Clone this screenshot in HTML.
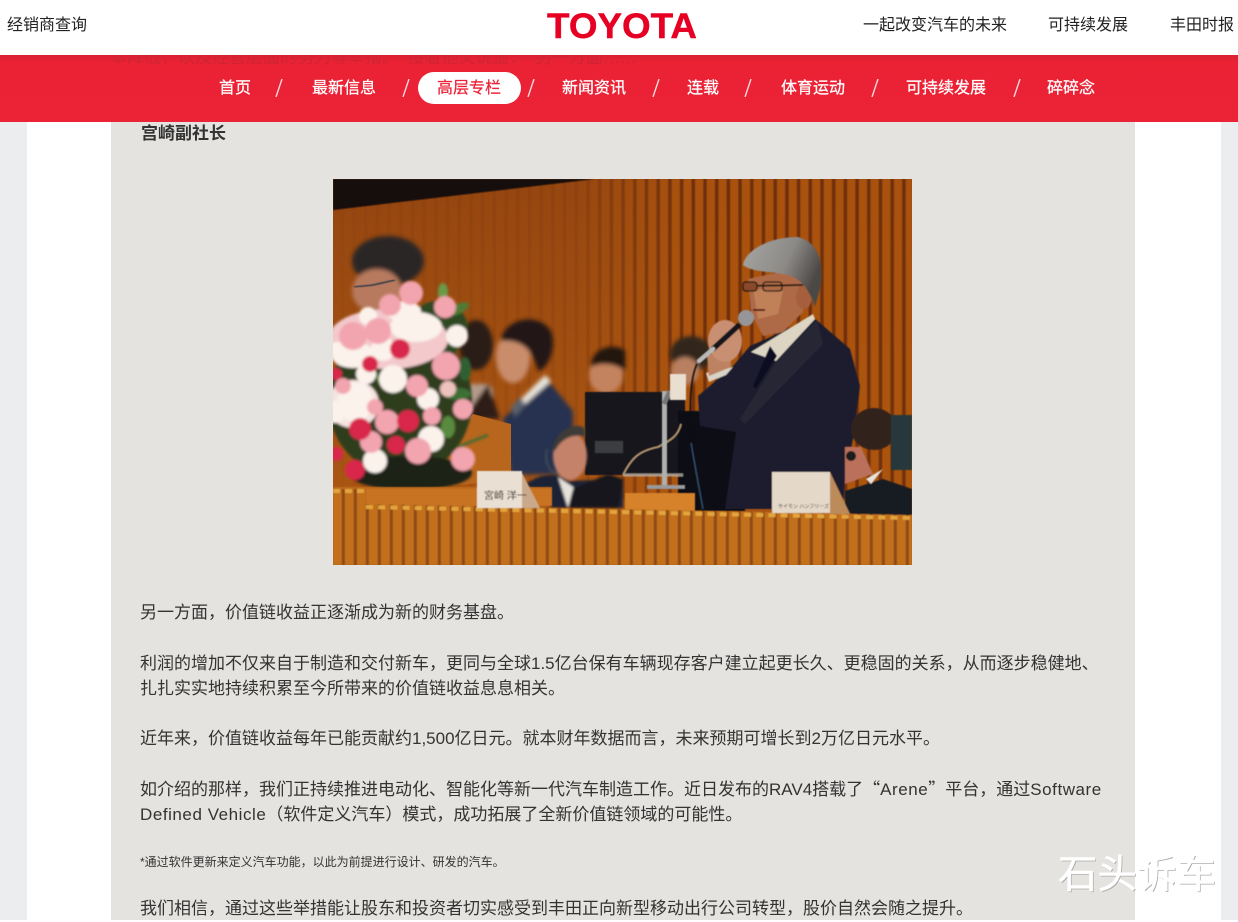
<!DOCTYPE html>
<html lang="zh"><head><meta charset="utf-8"><title>丰田</title>
<style>
html,body{margin:0;padding:0}
body{width:1238px;height:920px;position:relative;overflow:hidden;background:#fff;font-family:"Liberation Sans","Noto Sans CJK SC",sans-serif;color:#333}
.a{position:absolute;white-space:nowrap}
.l{position:absolute;left:140px;white-space:nowrap;font-size:17px;line-height:26px;color:#333}
.l b{font-weight:400;letter-spacing:.55px}
.l i{font-style:normal;font-family:"Noto Sans CJK SC",sans-serif}
.h{position:absolute;top:14px;font-size:16px;line-height:24px;color:#222;white-space:nowrap}
.n{position:absolute;top:77px;font-size:16px;line-height:24px;color:#fff;white-space:nowrap;-webkit-text-stroke:.25px #fff}
.s{position:absolute;top:79px;width:8px;height:18px}
</style></head><body>
<div class="a" style="left:0;top:0;width:27px;height:920px;background:#ecedee"></div>
<div class="a" style="left:1221px;top:0;width:17px;height:920px;background:#ecedee"></div>
<div class="a" style="left:111px;top:40px;width:1024px;height:880px;background:#e4e3df"></div>

<div class="a" style="left:0;top:55px;width:1238px;height:67px;background:linear-gradient(#d82232 0,#ea2234 7px,#ec2236 100%)"></div>
<div class="a" style="left:110px;top:45px;height:26px;overflow:hidden;font-size:17px;line-height:26px;color:#cf2434;clip-path:inset(10px 0 0 0)">本降低，以及经营层面的努力等举措。　接着他又说道：　另一方面……</div>
<div class="a" style="left:0;top:0;width:1238px;height:55px;background:#fff"></div>

<svg class="a" style="left:540px;top:5px" width="165" height="40" viewBox="0 0 165 40"><text x="7" y="33" font-family="Liberation Sans" font-weight="700" font-size="35" fill="#e60023" stroke="#e60023" stroke-width=".4" textLength="150" lengthAdjust="spacingAndGlyphs">TOYOTA</text></svg>
<div class="h" style="left:7px">经销商查询</div>
<div class="h" style="left:863px">一起改变汽车的未来</div>
<div class="h" style="left:1048px">可持续发展</div>
<div class="h" style="left:1170px">丰田时报</div>

<div class="a" style="left:418px;top:72px;width:103px;height:32px;border-radius:16px;background:#fff"></div>
<div class="n" style="left:219px">首页</div>
<div class="n" style="left:312px">最新信息</div>
<div class="n" style="left:437px;color:#ec2236;-webkit-text-stroke:.2px #ec2236">高层专栏</div>
<div class="n" style="left:562px">新闻资讯</div>
<div class="n" style="left:687px">连载</div>
<div class="n" style="left:781px">体育运动</div>
<div class="n" style="left:906px">可持续发展</div>
<div class="n" style="left:1047px">碎碎念</div>
<svg class="s" style="left:275px"><path d="M1 18L7 0" stroke="#f8d8dc" stroke-width="1.4"/></svg>
<svg class="s" style="left:402px"><path d="M1 18L7 0" stroke="#f8d8dc" stroke-width="1.4"/></svg>
<svg class="s" style="left:527px"><path d="M1 18L7 0" stroke="#f8d8dc" stroke-width="1.4"/></svg>
<svg class="s" style="left:652px"><path d="M1 18L7 0" stroke="#f8d8dc" stroke-width="1.4"/></svg>
<svg class="s" style="left:744px"><path d="M1 18L7 0" stroke="#f8d8dc" stroke-width="1.4"/></svg>
<svg class="s" style="left:871px"><path d="M1 18L7 0" stroke="#f8d8dc" stroke-width="1.4"/></svg>
<svg class="s" style="left:1013px"><path d="M1 18L7 0" stroke="#f8d8dc" stroke-width="1.4"/></svg>

<div class="l" style="top:121px;font-weight:700;left:141px">宫崎副社长</div>

<svg class="a" style="left:333px;top:179px" width="579" height="386" viewBox="0 0 579 386">
<defs>
<pattern id="st" width="11.7" height="10" patternUnits="userSpaceOnUse"><rect width="11.7" height="10" fill="#ad5410"/><rect x="7.5" width="3.6" height="10" fill="#682c07"/></pattern>
<pattern id="ds" width="12" height="10" patternUnits="userSpaceOnUse"><rect width="12" height="10" fill="#c2701f"/><rect x="8.8" width="3" height="10" fill="#8e4a12"/></pattern>
<linearGradient id="fd" x1="0" x2="1" y1="0" y2="0"><stop offset="0" stop-color="#fff" stop-opacity=".05"/><stop offset=".42" stop-color="#fff" stop-opacity=".12"/><stop offset=".62" stop-color="#fff" stop-opacity=".85"/></linearGradient>
<mask id="m" maskUnits="userSpaceOnUse" x="0" y="0" width="579" height="386"><rect width="579" height="386" fill="url(#fd)"/></mask>
<linearGradient id="wl" x1="0" x2="0" y1="0" y2="1"><stop offset="0" stop-color="#934510"/><stop offset=".8" stop-color="#aa5613"/></linearGradient>
<linearGradient id="hr" x1="0" x2="1" y1="0" y2=".4"><stop offset="0" stop-color="#a8a6a3"/><stop offset=".6" stop-color="#8c8a87"/><stop offset="1" stop-color="#4c4845"/></linearGradient>
<filter id="b0" x="-5%" y="-5%" width="110%" height="110%"><feGaussianBlur stdDeviation=".6"/></filter>
<filter id="b1" x="-10%" y="-10%" width="120%" height="120%"><feGaussianBlur stdDeviation="2.2"/></filter>
<filter id="b2" x="-10%" y="-10%" width="120%" height="120%"><feGaussianBlur stdDeviation="1.2"/></filter>
</defs>
<rect width="579" height="386" fill="url(#wl)"/>
<g mask="url(#m)"><rect width="579" height="320" fill="url(#st)" filter="url(#b0)"/></g>
<polygon points="0,0 262,0 0,31" fill="#150d08" filter="url(#b0)"/>
<g filter="url(#b1)">
<ellipse cx="143" cy="166" rx="17" ry="25" fill="#2a1c14"/>
<rect x="130" y="205" width="30" height="35" rx="8" fill="#b39a8a"/>
<polygon points="155,205 167,240 130,240" fill="#2d1f18"/>
<ellipse cx="180" cy="178" rx="17" ry="26" fill="#c98d6c"/>
<path d="M168,162 C170,140 205,132 218,152 C224,170 215,190 205,192 C200,172 190,160 168,162Z" fill="#241713"/>
<polygon points="170,240 212,198 240,232 240,295 178,296" fill="#26304f"/>
<polygon points="186,222 212,196 218,202 192,225" fill="#e6e2da"/>
<polygon points="178,228 188,218 192,226 182,238" fill="#5a6270"/>
<ellipse cx="273" cy="196" rx="17" ry="19" fill="#c4835f"/>
<path d="M258,188 C258,166 285,164 292,172 L292,192 C285,186 270,182 258,188Z" fill="#231710"/>
<ellipse cx="55" cy="82" rx="36" ry="25" fill="#2b2726"/>
<ellipse cx="44" cy="112" rx="25" ry="22" fill="#b87a5e"/>
</g>
<path d="M21,108 L40,106 L62,101" stroke="#333a44" stroke-width="1.6" fill="none" filter="url(#b0)"/>
<polygon points="140,235 178,245 178,300 95,310 120,260" fill="#b8661d"/>

<!-- monitor, dark equipment -->
<g filter="url(#b0)">
<rect x="252" y="213" width="100" height="83" fill="#15161a"/>
<rect x="262" y="262" width="28" height="12" fill="#3a3d40"/>
<rect x="345" y="232" width="67" height="100" fill="#0f1016"/>
<path d="M290,296 L350,296" stroke="#c8c2b8" stroke-width="3" opacity=".7"/>
<path d="M290,296 C298,280 305,272 325,268 C336,262 345,258 348,245" fill="none" stroke="#b89a74" stroke-width="1.6"/>
</g>
<g filter="url(#b2)">
<path d="M193,305 C205,295 225,292 235,302 L290,300 L290,329 L219,329 Z" fill="#1f2436"/>
<ellipse cx="237" cy="277" rx="17" ry="24" fill="#c4826a"/>
<path d="M220,270 C222,250 245,242 252,250 L252,258 C240,254 228,260 222,272Z" fill="#3d3a38"/>
<polygon points="225,298 240,308 248,329 235,329" fill="#e5e2dc"/>
<path d="M214,270 C211,285 217,293 225,295" fill="none" stroke="#444b58" stroke-width="2"/>
<polygon points="240,310 275,295 290,300 285,329 235,329" fill="#12131a"/>
</g>

<!-- flowers -->
<g filter="url(#b2)">
<ellipse cx="67" cy="222" rx="72" ry="76" fill="#2d3d1d"/>
<ellipse cx="77" cy="294" rx="62" ry="17" fill="#1d2312"/>
<ellipse cx="105" cy="150" rx="30" ry="28" fill="#2f4a22"/>
<ellipse cx="125" cy="130" rx="12" ry="5" fill="#4f7c35" transform="rotate(-25 125 130)"/>
<ellipse cx="110" cy="113" rx="5" ry="9" fill="#6a9a48"/>
<ellipse cx="132" cy="190" rx="6" ry="12" fill="#2f6030"/>
<ellipse cx="125" cy="215" rx="13" ry="6" fill="#3d7034"/>
<ellipse cx="115" cy="248" rx="7" ry="11" fill="#5a8a40"/>
<ellipse cx="92" cy="165" rx="8" ry="12" fill="#3d7034"/>
<path d="M125,268 L155,256" stroke="#4c6a30" stroke-width="3"/>
<path d="M40,190 L48,205" stroke="#5f8a3f" stroke-width="3"/>
<ellipse cx="55" cy="160" rx="60" ry="30" fill="#f3c9cc"/>
<ellipse cx="20" cy="225" rx="26" ry="24" fill="#f6e3e0"/>
<g fill="#fbf2ec">
<circle cx="124" cy="157" r="11"/><ellipse cx="83" cy="148" rx="26" ry="15"/><circle cx="60" cy="200" r="14"/><ellipse cx="22" cy="223" rx="18" ry="20"/>
<ellipse cx="20" cy="176" rx="22" ry="13"/><circle cx="33" cy="195" r="10"/><circle cx="50" cy="170" r="12"/><circle cx="95" cy="220" r="11"/>
<circle cx="42" cy="282" r="12"/><circle cx="98" cy="260" r="13"/><circle cx="2" cy="233" r="11"/><ellipse cx="70" cy="132" rx="18" ry="10"/><circle cx="35" cy="137" r="9"/>
<ellipse cx="5" cy="170" rx="12" ry="7"/>
</g>
<g fill="#f2a4af">
<circle cx="78" cy="114" r="12"/><circle cx="112" cy="128" r="11"/><circle cx="20" cy="157" r="14"/><circle cx="45" cy="152" r="13"/>
<circle cx="113" cy="187" r="14"/><circle cx="84" cy="207" r="11"/><circle cx="130" cy="230" r="10"/><circle cx="54" cy="243" r="12"/>
<circle cx="99" cy="237" r="9"/><circle cx="85" cy="272" r="13"/><circle cx="130" cy="280" r="12"/><circle cx="38" cy="263" r="11"/>
<circle cx="42" cy="228" r="8"/><circle cx="10" cy="207" r="8"/><circle cx="57" cy="126" r="11"/><circle cx="115" cy="210" r="8" fill="#eec3bd"/>
</g>
<g fill="#d9284c">
<circle cx="67" cy="170" r="10"/><circle cx="75" cy="242" r="11"/><circle cx="27" cy="250" r="11"/><circle cx="63" cy="266" r="9"/>
<circle cx="22" cy="291" r="10"/><circle cx="3" cy="275" r="7"/><circle cx="37" cy="185" r="8"/><circle cx="3" cy="195" r="6"/>
</g>
</g>

<!-- right man's background head -->
<g filter="url(#b1)">
<ellipse cx="358" cy="175" rx="21" ry="18" fill="#33251d"/>
<ellipse cx="352" cy="192" rx="14" ry="14" fill="#b88060"/>
</g>
<!-- right man -->
<g filter="url(#b0)">
<polygon points="365,217 400,187 417,167 433,160 480,138 517,170 527,207 520,260 512,300 510,330 392,330 403,253 367,247" fill="#1d1f2e"/>
<polygon points="418,173 480,135 482,140 443,182" fill="#ddd5c3"/>
<polygon points="437,167 444,177 423,210 420,207" fill="#0f1120"/>
<polygon points="443,183 484,141 490,165 412,245 407,240" fill="#252736"/>
<polygon points="415,100 418,133 430,157 450,153 470,133 472,97 447,93" fill="#ae6a46"/>
<polygon points="420,110 450,112 445,135 425,140" fill="#c08058"/>
<ellipse cx="471" cy="118" rx="8" ry="12" fill="#a65f3d"/>
<path d="M410,86 C412,72 435,58 465,58 C490,65 490,90 487,110 L482,128 C478,115 470,100 455,96 C440,92 420,94 410,86Z" fill="url(#hr)"/>
<path d="M410,107 L470,106" stroke="#1c1410" stroke-width="1.8"/>
<rect x="410" y="103" width="14" height="9" rx="3" fill="#8a4a2c" stroke="#1c1410" stroke-width="1.3"/>
<rect x="430" y="103" width="19" height="9" rx="3" fill="none" stroke="#1c1410" stroke-width="1.3"/>
<path d="M420,131 L432,131" stroke="#5a2418" stroke-width="2"/>
<polygon points="373,194 400,188 393,196 376,203" fill="#d9d2c6"/>
<polygon points="374,176 398,172 398,188 376,197" fill="#bd8262"/>
<ellipse cx="392" cy="162" rx="17" ry="21" fill="#c98f72"/>
<path d="M405,147 L380,170" stroke="#15151b" stroke-width="5.5" stroke-linecap="round"/>
<path d="M380,170 L366,182" stroke="#b9b9b9" stroke-width="4.5" stroke-linecap="round"/>
<circle cx="413" cy="139" r="8" fill="#96969a"/>
<path d="M364,185 C352,210 358,280 368,332" fill="none" stroke="#111" stroke-width="1.6"/>
<path d="M358,264 L370,330" stroke="#31506f" stroke-width="1.5"/>

<!-- stand -->
<rect x="329" y="212" width="5" height="96" fill="#b0b0ae"/>
<path d="M331,225 L337,212" stroke="#777" stroke-width="5"/>
<rect x="337" y="195" width="16" height="26" fill="#e9dfd0"/>
<rect x="314" y="306" width="38" height="4" fill="#999"/>
<rect x="292" y="314" width="70" height="18" fill="#d6822c"/>

<!-- man back right -->
<ellipse cx="541" cy="250" rx="23" ry="21" fill="#33241c"/>
<rect x="558" y="236" width="21" height="55" fill="#28383a"/>
<polygon points="512,268 528,268 540,295 512,305" fill="#ba6f5a"/>
<circle cx="518" cy="277" r="5" fill="#1c1c1c"/>
<polygon points="512,312 550,300 579,310 579,336 512,336" fill="#181a24"/>
<polygon points="533,300 550,290 538,305" fill="#e6e3dd"/>

<!-- desk -->
<polygon points="0,308 219,308 219,325 31,325 31,386 0,386" fill="#bf6a1e"/>
<polygon points="33,310 219,310 219,327 33,327" fill="#c77322"/>
<rect y="310" width="33" height="76" fill="url(#ds)"/>
<polygon points="31,325 579,336 579,386 31,386" fill="url(#ds)"/>
<path d="M33,328 L579,339" stroke="#e2a43c" stroke-width="4" stroke-dasharray="7 5.2"/>
<path d="M0,312 H33" stroke="#e2a43c" stroke-width="4" stroke-dasharray="7 5"/>

<!-- cards -->
<polygon points="188,292 207,329 188,329" fill="#c9a98a"/>
<rect x="144" y="292" width="45" height="37" fill="#e9dfd2"/>
<text x="151" y="320" font-size="10" fill="#2a1a14" font-family="Liberation Sans,Noto Sans CJK JP,sans-serif">宮崎 洋一</text>
<polygon points="497,293 517,335 497,335" fill="#bd8a5a"/>
<rect x="439" y="293" width="58" height="41" fill="#e4d8c8"/>
<text x="445" y="329" font-size="5" fill="#3a2a20" font-family="Liberation Sans,Noto Sans CJK JP,sans-serif">サイモン ハンフリーズ</text>
</g>
</svg>

<div class="l" style="top:600px">另一方面，价值链收益正逐渐成为新的财务基盘。</div>
<div class="l" style="top:651px">利润的增加不仅来自于制造和交付新车，更同与全球1.5亿台保有车辆现存客户建立起更长久、更稳固的关系，从而逐步稳健地、</div>
<div class="l" style="top:676px">扎扎实实地持续积累至今所带来的价值链收益息息相关。</div>
<div class="l" style="top:726px">近年来，价值链收益每年已能贡献约1,500亿日元。就本财年数据而言，未来预期可增长到2万亿日元水平。</div>
<div class="l" style="top:775px">如介绍的那样，我们正持续推进电动化、智能化等新一代汽车制造工作。近日发布的RAV4搭载了<i>“</i><b>Arene</b><i>”</i>平台，通过<b>Software</b></div>
<div class="l" style="top:802px"><b>Defined Vehicle</b>（软件定义汽车）模式，成功拓展了全新价值链领域的可能性。</div>
<div class="l" style="top:849px;font-size:12px">*通过软件更新来定义汽车功能，以此为前提进行设计、研发的汽车。</div>
<div class="l" style="top:896px">我们相信，通过这些举措能让股东和投资者切实感受到丰田正向新型移动出行公司转型，股价自然会随之提升。</div>

<div class="a" style="left:1058px;top:850px;font-size:39.5px;line-height:50px;color:#fff;-webkit-text-stroke:.5px #fff;text-shadow:1px 1px 0 #aaa">石头诉车</div>
</body></html>
